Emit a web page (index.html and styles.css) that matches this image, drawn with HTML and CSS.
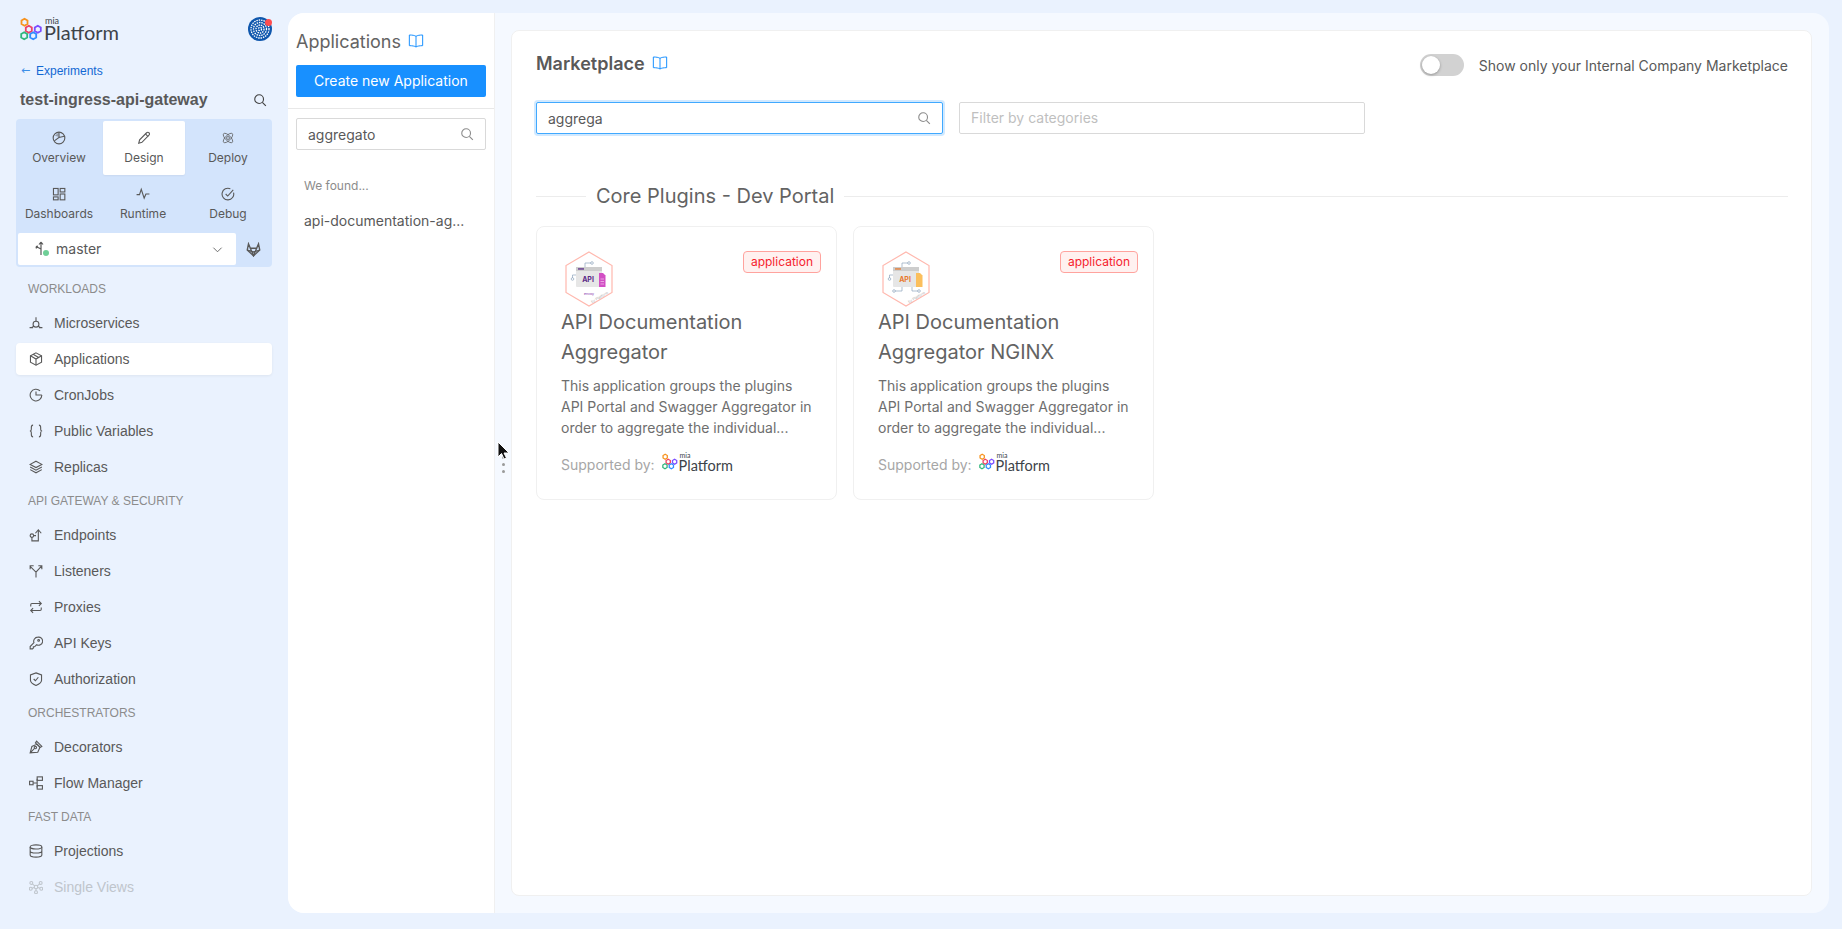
FILE: index.html
```html
<!DOCTYPE html>
<html lang="en">
<head>
    <meta charset="UTF-8">
    <meta name="viewport" content="width=device-width, initial-scale=1.0">
    <title>Applications - Mia Platform</title>
    <link rel="stylesheet" href="styles.css">
</head>
<body>
    <svg class="defs" width="0" height="0">
        <symbol id="i-search" viewBox="0 0 24 24"><circle cx="10.5" cy="10.5" r="7.5"/><path d="M16 16l6 6"/></symbol>
        <symbol id="i-book" viewBox="0 0 24 24"><path d="M12 5C10 3.5 6 3 2 3v16c4 0 8 .5 10 2 2-1.500 6-2 10-2V3c-4 0-8 .5-10 2zM12 5v16"/></symbol>
        <symbol id="i-logo" viewBox="0 0 24 22">
            <g fill="none" stroke-width="1.800">
                <path stroke="#f7931e" d="M4.500.8l3 1.800v3.400l-3 1.800-3-1.800V2.600z"/>
                <path stroke="#ee4266" d="M8.800 7.800l3 1.800V13l-3 1.800-3-1.800V9.600z"/>
                <path stroke="#7c4dff" d="M17.800 7.800l3 1.800V13l-3 1.800-3-1.800V9.600z"/>
                <path stroke="#2fb67c" d="M4.200 14.200l3 1.800v3.400l-3 1.800-3-1.800V16z"/>
                <path stroke="#2f8cff" d="M13.200 14.200l3 1.800v3.400l-3 1.800-3-1.800V16z"/>
            </g>
        </symbol>
        <symbol id="i-overview" viewBox="0 0 24 24"><circle cx="12" cy="12" r="10"/><path d="M12 2v9L4 17M12 11l9-2"/><path d="M5 8l6-5v7z" fill="currentColor" stroke="none" opacity=".5"/></symbol>
        <symbol id="i-design" viewBox="0 0 24 24"><path d="M3 21l1.500-6L16.500 3c1.300-1.300 3-1.300 4 0 1.200 1.200 1.200 2.800 0 4L8.500 19.500z"/><path d="M14.500 5l4.500 4.500"/></symbol>
        <symbol id="i-deploy" viewBox="0 0 24 24"><ellipse cx="12" cy="12" rx="10.500" ry="4.500" transform="rotate(-45 12 12)" stroke-width="1.300"/><ellipse cx="12" cy="12" rx="10.500" ry="4.500" transform="rotate(45 12 12)" stroke-width="1.300"/><circle cx="12" cy="12" r="2.500" stroke-width="1.300"/></symbol>
        <symbol id="i-dashboards" viewBox="0 0 24 24"><rect x="2.500" y="2.500" width="8" height="11"/><rect x="14" y="2.500" width="8" height="6"/><rect x="2.500" y="17" width="8" height="5"/><rect x="14" y="12" width="8" height="10"/></symbol>
        <symbol id="i-runtime" viewBox="0 0 24 24"><path d="M1 13h5l3-9 5 15 3-7h6"/></symbol>
        <symbol id="i-debug" viewBox="0 0 24 24"><path d="M21.500 9.500A10 10 0 1 1 16 3"/><path d="M8 12l3.500 3.500L21 5"/></symbol>
        <symbol id="i-chevron" viewBox="0 0 24 24"><path d="M3 8l9 9 9-9"/></symbol>
        <symbol id="i-gitlab" viewBox="0 0 24 24"><path d="M12 22L2 13 4 3l3 7h10l3-7 2 10z"/><path d="M2 13l10 3 10-3M7 10l5 12 5-12"/></symbol>
        <symbol id="i-microservices" viewBox="0 0 24 24"><circle cx="12" cy="14" r="5"/><path d="M12 2v7M1 20h6M17 20h6M4 20l5-3M20 20l-5-3"/></symbol>
        <symbol id="i-box" viewBox="0 0 24 24"><path d="M12 1.500l9.500 5v11L12 22.500l-9.500-5v-11z"/><path d="M2.500 6.500L12 12l9.500-5.500M12 12v10.500M7 4l9.500 5.500"/></symbol>
        <symbol id="i-clock" viewBox="0 0 24 24"><path d="M22 12a10 10 0 1 1-3-7"/><path d="M12 6v6h10"/></symbol>
        <symbol id="i-braces" viewBox="0 0 24 24"><path d="M7 2c-3 0-3 2-3 4v3c0 2-1 3-2.500 3C3 12 4 13 4 15v3c0 2 0 4 3 4M17 2c3 0 3 2 3 4v3c0 2 1 3 2.500 3-1.500 0-2.500 1-2.500 3v3c0 2 0 4-3 4"/></symbol>
        <symbol id="i-layers" viewBox="0 0 24 24"><path d="M12 2l10 5.500-10 5.500L2 7.500zM2 12l10 5.500L22 12M2 16.500L12 22l10-5.500"/></symbol>
        <symbol id="i-endpoints" viewBox="0 0 24 24"><circle cx="5" cy="13" r="3"/><path d="M5 16v6h11V4M11 9l5-6 5 6M8 13h4"/></symbol>
        <symbol id="i-listeners" viewBox="0 0 24 24"><path d="M2 4l10 10v9M12 14l9-10M2 9V3h6M16 3h6v6"/></symbol>
        <symbol id="i-proxies" viewBox="0 0 24 24"><path d="M3 11V8c0-1.500 1-2 2-2h16M17 2l4 4-4 4M21 13v3c0 1.500-1 2-2 2H3M7 22l-4-4 4-4"/></symbol>
        <symbol id="i-key" viewBox="0 0 24 24"><path d="M15 2a7 7 0 0 0-6.500 9.500L2 18v4h4l1.500-1.500v-2h2L13 15a7 7 0 1 0 2-13z"/><circle cx="16.500" cy="7.500" r="1.500"/></symbol>
        <symbol id="i-shield" viewBox="0 0 24 24"><path d="M12 1.500L21.500 5v9c0 4-5 7-9.500 9-4.500-2-9.500-5-9.500-9V5z"/><path d="M8 12l3 3 5-6"/></symbol>
        <symbol id="i-pen" viewBox="0 0 24 24"><path d="M2 22l3-11 9-4 5 5-4 9zM13 2l9 9-3 2-8-8zM2 22l7.500-7.500"/><circle cx="11" cy="13" r="2"/></symbol>
        <symbol id="i-flow" viewBox="0 0 24 24"><rect x="1" y="9" width="6" height="6"/><rect x="14" y="1.500" width="9" height="6"/><rect x="14" y="16.500" width="9" height="6"/><path d="M7 12h7M14 12V4.500M14 12v7.500"/></symbol>
        <symbol id="i-database" viewBox="0 0 24 24"><ellipse cx="12" cy="5" rx="10" ry="3.500"/><path d="M2 5v14c0 2 4.500 3.500 10 3.500s10-1.500 10-3.500V5M2 12c0 2 4.500 3.500 10 3.500S22 14 22 12"/></symbol>
        <symbol id="i-views" viewBox="0 0 24 24"><circle cx="12" cy="12" r="3"/><circle cx="4" cy="5" r="2.500"/><circle cx="20" cy="5" r="2.500"/><circle cx="3" cy="15" r="2.500"/><circle cx="21" cy="15" r="2.500"/><circle cx="12" cy="21" r="2.500"/><path d="M6 7l4 3M18 7l-4 3M5 14l4-1M19 14l-4-1M12 15v4"/></symbol>
    </svg>

    <!-- Left navigation -->
    <aside class="sidebar">
        <div class="brand-row">
            <div class="mia-logo">
                <svg class="mia-logo-mark"><use href="#i-logo"/></svg>
                <div class="mia-logo-text"><small>mia</small><span>Platform</span></div>
            </div>
            <div class="avatar">
                <svg viewBox="0 0 24 24" width="24" height="24">
                    <circle cx="12" cy="12" r="12" fill="#0f57ad"/>
                    <g fill="none" stroke="#fff" stroke-width="1.300" stroke-dasharray="1.500 .9">
                        <circle cx="12" cy="12" r="9"/>
                        <circle cx="12" cy="12" r="6.500"/>
                        <circle cx="12" cy="12" r="4"/>
                        <circle cx="12" cy="12" r="1.600"/>
                    </g>
                </svg>
                <span class="avatar-dot"></span>
            </div>
        </div>

        <a class="back-link" href="#"><span class="back-arrow">←</span>Experiments</a>

        <div class="project-row">
            <span class="project-name">test-ingress-api-gateway</span>
            <svg class="icon icon-search-dark"><use href="#i-search"/></svg>
        </div>

        <div class="section-nav">
            <div class="tabs">
                <a class="tab" href="#"><svg class="icon"><use href="#i-overview"/></svg>Overview</a>
                <a class="tab active" href="#"><svg class="icon"><use href="#i-design"/></svg>Design</a>
                <a class="tab" href="#"><svg class="icon"><use href="#i-deploy"/></svg>Deploy</a>
                <a class="tab" href="#"><svg class="icon"><use href="#i-dashboards"/></svg>Dashboards</a>
                <a class="tab" href="#"><svg class="icon"><use href="#i-runtime"/></svg>Runtime</a>
                <a class="tab" href="#"><svg class="icon"><use href="#i-debug"/></svg>Debug</a>
            </div>
            <div class="branch-row">
                <div class="branch-select">
                    <svg class="branch-icon" viewBox="0 0 18 18" width="18" height="18">
                        <path d="M8 2v13M8 2L6 4.500M8 2l2 2.500M8 9L3 6.500M3 6.500l2-.5M3 6.500l.5 2" fill="none" stroke="#595959" stroke-width="1.200"/>
                        <circle cx="13" cy="13" r="3" fill="#6fcf97"/>
                    </svg>
                    <span class="branch-name">master</span>
                    <svg class="icon icon-chevron"><use href="#i-chevron"/></svg>
                </div>
                <svg class="icon icon-gitlab"><use href="#i-gitlab"/></svg>
            </div>
        </div>

        <nav class="menu">
            <div class="menu-label">WORKLOADS</div>
            <a class="menu-item" href="#"><svg class="icon"><use href="#i-microservices"/></svg>Microservices</a>
            <a class="menu-item active" href="#"><svg class="icon"><use href="#i-box"/></svg>Applications</a>
            <a class="menu-item" href="#"><svg class="icon"><use href="#i-clock"/></svg>CronJobs</a>
            <a class="menu-item" href="#"><svg class="icon"><use href="#i-braces"/></svg>Public Variables</a>
            <a class="menu-item" href="#"><svg class="icon"><use href="#i-layers"/></svg>Replicas</a>

            <div class="menu-label">API GATEWAY &amp; SECURITY</div>
            <a class="menu-item" href="#"><svg class="icon"><use href="#i-endpoints"/></svg>Endpoints</a>
            <a class="menu-item" href="#"><svg class="icon"><use href="#i-listeners"/></svg>Listeners</a>
            <a class="menu-item" href="#"><svg class="icon"><use href="#i-proxies"/></svg>Proxies</a>
            <a class="menu-item" href="#"><svg class="icon"><use href="#i-key"/></svg>API Keys</a>
            <a class="menu-item" href="#"><svg class="icon"><use href="#i-shield"/></svg>Authorization</a>

            <div class="menu-label">ORCHESTRATORS</div>
            <a class="menu-item" href="#"><svg class="icon"><use href="#i-pen"/></svg>Decorators</a>
            <a class="menu-item" href="#"><svg class="icon"><use href="#i-flow"/></svg>Flow Manager</a>

            <div class="menu-label">FAST DATA</div>
            <a class="menu-item" href="#"><svg class="icon"><use href="#i-database"/></svg>Projections</a>
            <a class="menu-item disabled" href="#"><svg class="icon"><use href="#i-views"/></svg>Single Views</a>
        </nav>
    </aside>

    <div class="panel">
        <!-- Applications list -->
        <section class="apps-column">
            <div class="apps-head">
                <div class="apps-title">Applications <svg class="icon icon-book"><use href="#i-book"/></svg></div>
                <button class="create-btn">Create new Application</button>
            </div>
            <div class="apps-body">
                <div class="search-box">
                    <input type="text" value="aggregato">
                    <svg class="icon icon-search"><use href="#i-search"/></svg>
                </div>
                <div class="found-label">We found...</div>
                <div class="found-item">api-documentation-ag...</div>
            </div>
        </section>

        <!-- Marketplace -->
        <main class="content">
            <div class="market-card">
                <div class="market-head">
                    <div class="market-title">Marketplace <svg class="icon icon-book"><use href="#i-book"/></svg></div>
                    <div class="internal-toggle">
                        <span class="switch"><span class="switch-knob"></span></span>
                        Show only your Internal Company Marketplace
                    </div>
                </div>

                <div class="filters">
                    <div class="search-box focused">
                        <input type="text" value="aggrega">
                        <svg class="icon icon-search"><use href="#i-search"/></svg>
                    </div>
                    <div class="search-box filter-box">
                        <input type="text" placeholder="Filter by categories">
                    </div>
                </div>

                <div class="group-title"><span>Core Plugins - Dev Portal</span></div>

                <div class="plugin-grid">
                    <article class="plugin-card">
                        <span class="plugin-badge">application</span>
                        <svg class="plugin-image" viewBox="0 0 48 56" width="48" height="56">
                            <path d="M24 1l23 13.500v27L24 55 1 41.500v-27z" fill="#fff" stroke="#ffb8ae" stroke-width="1.200"/>
                            <g fill="none" stroke="#8da4bb" stroke-width=".7">
                                <path d="M20 16v-4h6"/><circle cx="27" cy="12" r="1.300"/>
                                <path d="M11 24H7.500v3"/><circle cx="7.500" cy="28" r="1.300"/>
                            </g>
                            <rect x="11" y="16" width="26" height="20" rx="1" fill="#e6e6e6"/>
                            <rect x="11" y="16" width="26" height="4" fill="#cdcdcd"/>
                            <rect x="13" y="17.300" width="6" height="1.300" fill="#5b2a86"/>
                            <text class="plugin-image-api" x="23" y="31" fill="#5b2a86">API</text>
                            <path d="M34 22h4l2.500 2.500V36H34z" fill="#d24fc4"/>
                            <path d="M35.500 28h3.500M35.500 30.500h3.500M35.500 33h3.500" stroke="#f4c9ef" stroke-width=".7"/>
                            <text class="plugin-image-small" x="19" y="44" fill="#7b2fa8">envoy</text>
                            <text class="plugin-image-small" x="27" y="52" fill="#a6a6a6" transform="rotate(-30 27 52)">by Platform</text>
                        </svg>
                        <h3 class="plugin-name">API Documentation Aggregator</h3>
                        <p class="plugin-desc">This application groups the plugins API Portal and Swagger Aggregator in order to aggregate the individual...</p>
                        <div class="plugin-support">
                            Supported by:
                            <div class="mia-logo small">
                                <svg class="mia-logo-mark"><use href="#i-logo"/></svg>
                                <div class="mia-logo-text"><small>mia</small><span>Platform</span></div>
                            </div>
                        </div>
                    </article>

                    <article class="plugin-card">
                        <span class="plugin-badge">application</span>
                        <svg class="plugin-image" viewBox="0 0 48 56" width="48" height="56">
                            <path d="M24 1l23 13.500v27L24 55 1 41.500v-27z" fill="#fff" stroke="#ffb8ae" stroke-width="1.200"/>
                            <g fill="none" stroke="#8da4bb" stroke-width=".7">
                                <path d="M20 16v-4h6"/><circle cx="27" cy="12" r="1.300"/>
                                <path d="M11 24H7.500v3"/><circle cx="7.500" cy="28" r="1.300"/>
                                <path d="M20 36v4h-7"/><circle cx="12" cy="40" r="1.300"/>
                                <path d="M30 36v4h6"/><circle cx="37" cy="40" r="1.300"/>
                            </g>
                            <rect x="11" y="16" width="26" height="20" rx="1" fill="#e6e6e6"/>
                            <rect x="11" y="16" width="26" height="4" fill="#cdcdcd"/>
                            <rect x="13" y="17.300" width="6" height="1.300" fill="#e8792e"/>
                            <text class="plugin-image-api" x="23" y="31" fill="#e8792e">API</text>
                            <path d="M34 22h4l2.500 2.500V36H34z" fill="#fbbf5d"/>
                            <text class="plugin-image-small" x="27" y="52" fill="#a6a6a6" transform="rotate(-30 27 52)">by Platform</text>
                        </svg>
                        <h3 class="plugin-name">API Documentation Aggregator NGINX</h3>
                        <p class="plugin-desc">This application groups the plugins API Portal and Swagger Aggregator in order to aggregate the individual...</p>
                        <div class="plugin-support">
                            Supported by:
                            <div class="mia-logo small">
                                <svg class="mia-logo-mark"><use href="#i-logo"/></svg>
                                <div class="mia-logo-text"><small>mia</small><span>Platform</span></div>
                            </div>
                        </div>
                    </article>
                </div>
            </div>
        </main>

        <!-- Column resize handle and mouse pointer -->
        <div class="resize-handle"><i></i><i></i><i></i></div>
        <svg class="mouse-cursor" viewBox="0 0 14 20" width="14" height="20">
            <path d="M1 1v15l3.500-3.500L7 18l2.500-1-2.500-5h5z" fill="#111" stroke="#fff" stroke-width="1"/>
        </svg>
    </div>
</body>
</html>
```

FILE: styles.css
```css
* {
    box-sizing: border-box;
}

html, body {
    height: 100%;
}

body {
    display: flex;
    margin: 0;
    overflow: hidden;
    background-color: #eaf2fe;
    color: #595959;
    font-family: Inter, "Liberation Sans", sans-serif;
    font-size: 14px;
}

a {
    color: inherit;
    text-decoration: none;
}

.defs {
    position: absolute;
}

.icon {
    display: block;
    flex: none;
    width: 14px;
    height: 14px;
    fill: none;
    stroke: currentColor;
    stroke-width: 1.900;
}

/* Sidebar */
.sidebar {
    flex: none;
    width: 288px;
    height: 100%;
    overflow: hidden;
    padding: 17px 16px 0;
}

.brand-row {
    display: flex;
    justify-content: space-between;
    height: 24px;
    padding-left: 4px;
}

.mia-logo {
    display: flex;
    height: 24px;
}

.mia-logo-mark {
    width: 24px;
    height: 24px;
}

.mia-logo-text {
    color: #3d4349;
    font-family: Lato, sans-serif;
    font-size: 20px;
}

.mia-logo-text small {
    display: block;
    height: 8px;
    padding-left: 1px;
    font-size: 9px;
    line-height: 8px;
}

.mia-logo-text span {
    display: block;
    height: 16px;
    line-height: 14px;
}

.mia-logo.small {
    height: 18px;
    margin: -4px 0 0 7px;
}

.mia-logo.small .mia-logo-mark {
    width: 17px;
    height: 17px;
}

.mia-logo.small .mia-logo-text {
    font-size: 14.500px;
}

.mia-logo.small .mia-logo-text small {
    height: 6px;
    font-size: 7px;
    line-height: 4px;
}

.mia-logo.small .mia-logo-text span {
    height: 12px;
    line-height: 13px;
}

.avatar {
    position: relative;
    width: 24px;
    height: 24px;
}

.avatar-dot {
    position: absolute;
    top: 2px;
    right: 0;
    width: 7px;
    height: 7px;
    border-radius: 50%;
    background-color: #ff4d4f;
}

.back-link {
    display: flex;
    height: 16px;
    margin: 22px 0 0 4px;
    color: #1268d3;
    font-family: "Liberation Sans", sans-serif;
    font-size: 12px;
    line-height: 16px;
}

.back-arrow {
    width: 16px;
    padding-left: 1px;
    color: #3d8fe8;
    font-family: "DejaVu Sans", sans-serif;
    font-size: 11px;
}

.project-row {
    display: flex;
    align-items: center;
    justify-content: space-between;
    height: 24px;
    margin-top: 9px;
    padding: 0 5px 0 4px;
}

.project-name {
    color: #595959;
    font-family: "Liberation Sans", sans-serif;
    font-size: 16px;
    font-weight: 700;
}

.icon-search-dark {
    color: #404040;
}

.section-nav {
    height: 148px;
    margin-top: 7px;
    padding: 2px;
    border-radius: 4px;
    background-color: #d3e4fc;
}

.tabs {
    display: grid;
    grid-template-columns: 82px 86px 84px;
    grid-auto-rows: 54px;
    row-gap: 2px;
}

.tab {
    display: flex;
    flex-direction: column;
    align-items: center;
    padding-top: 10px;
    font-size: 12px;
    line-height: 16px;
    white-space: nowrap;
}

.tab .icon {
    margin-bottom: 5px;
}

.tab.active {
    margin: 0 1px 0 3px;
    border-radius: 2px;
    background-color: #fff;
    box-shadow: 0 1px 2px rgba(0, 0, 0, 0.05);
}

.branch-row {
    display: flex;
    align-items: center;
    margin-top: 2px;
}

.branch-select {
    display: flex;
    align-items: center;
    width: 218px;
    height: 32px;
    padding: 0 13px 0 15px;
    border-radius: 2px;
    background-color: #fff;
}

.branch-icon {
    margin-right: 5px;
}

.branch-name {
    flex: 1;
    margin-top: -2px;
}

.icon-chevron {
    width: 11px;
    height: 11px;
}

.icon-gitlab {
    width: 15px;
    height: 15px;
    margin-left: 10px;
    stroke-width: 2.200;
}

/* Sidebar menu */
.menu {
    margin-top: 8px;
}

.menu-label {
    height: 28px;
    margin-bottom: 4px;
    padding-left: 12px;
    color: #8c8c8c;
    font-family: "Liberation Sans", sans-serif;
    font-size: 12px;
    line-height: 28px;
}

.menu-item {
    display: flex;
    align-items: center;
    height: 32px;
    margin-bottom: 4px;
    padding-left: 13px;
    border-radius: 4px;
    font-family: "Liberation Sans", sans-serif;
}

.menu-item .icon {
    margin-right: 11px;
}

.menu-item.active {
    background-color: #fff;
    box-shadow: 0 1px 3px rgba(0, 0, 0, 0.06);
}

.menu-item.disabled {
    color: #bfc5cc;
}

/* Main panel */
.panel {
    position: relative;
    display: flex;
    flex: 1;
    height: 900px;
    margin: 13px 13px 0 0;
    overflow: hidden;
    border-radius: 16px;
    background-color: #f5f9ff;
}

.apps-column {
    flex: none;
    width: 207px;
    border-right: 1px solid #f0f0f0;
    background-color: #fff;
}

.apps-head {
    height: 96px;
    padding: 15px 8px 0;
    border-bottom: 1px solid #e8e8e8;
}

.apps-title {
    display: flex;
    align-items: center;
    height: 26px;
    color: #636363;
    font-size: 18px;
}

.icon-book {
    width: 16px;
    height: 16px;
    margin-left: 7px;
    color: #1890ff;
    stroke-width: 1.500;
}

.create-btn {
    display: block;
    width: 190px;
    height: 32px;
    margin-top: 11px;
    padding: 0 0 2px;
    border: none;
    border-radius: 2px;
    background-color: #1890ff;
    color: #fff;
    font-family: inherit;
    font-size: 14px;
}

.apps-body {
    padding: 9px 8px 0;
}

.search-box {
    position: relative;
    display: flex;
    align-items: center;
    height: 32px;
    border: 1px solid #d9d9d9;
    border-radius: 2px;
    background-color: #fff;
}

.search-box input {
    flex: 1;
    width: 100%;
    height: 100%;
    padding: 0 11px;
    border: none;
    outline: none;
    background: transparent;
    color: #595959;
    font-family: inherit;
    font-size: 14px;
}

.search-box input::placeholder {
    color: #bfbfbf;
}

.search-box.focused {
    border-color: #40a9ff;
    box-shadow: 0 0 0 2px rgba(24, 144, 255, 0.2);
}

.filter-box {
    padding-bottom: 2px;
}

.icon-search {
    margin-right: 11px;
    color: #8c8c8c;
}

.found-label {
    margin-top: 28px;
    padding-left: 8px;
    color: #8c8c8c;
    font-size: 12px;
    line-height: 16px;
}

.found-item {
    margin-top: 17px;
    padding-left: 8px;
    line-height: 20px;
}

.content {
    flex: 1;
    min-width: 0;
    padding: 17px 17px 17px 16px;
}

.market-card {
    height: 100%;
    padding: 0 23px 0 24px;
    border: 1px solid #f0f0f0;
    border-radius: 8px;
    background-color: #fff;
}

.market-head {
    display: flex;
    justify-content: space-between;
    height: 26px;
    margin-top: 21px;
}

.market-title {
    display: flex;
    align-items: center;
    height: 24px;
    margin-top: -1px;
    color: #595959;
    font-size: 18px;
    font-weight: 600;
}

.internal-toggle {
    display: flex;
    align-items: center;
    gap: 15px;
    color: #595959;
}

.switch {
    position: relative;
    width: 44px;
    height: 22px;
    border-radius: 11px;
    background-color: #d2d2d2;
}

.switch-knob {
    position: absolute;
    top: 2px;
    left: 2px;
    width: 18px;
    height: 18px;
    border-radius: 50%;
    background-color: #fff;
    box-shadow: 0 1px 3px rgba(0, 0, 0, 0.3);
}

.filters {
    display: grid;
    grid-template-columns: 407px 406px;
    column-gap: 16px;
    margin-top: 24px;
}

.group-title {
    display: flex;
    align-items: center;
    gap: 10px;
    height: 28px;
    margin-top: 48px;
    color: #636363;
    font-size: 20px;
    line-height: 28px;
}

.group-title::before,
.group-title::after {
    content: "";
    height: 1px;
    background-color: #ececec;
}

.group-title::before {
    width: 50px;
}

.group-title::after {
    flex: 1;
}

.plugin-grid {
    display: grid;
    grid-template-columns: repeat(auto-fill, 301px);
    gap: 16px;
    margin-top: 16px;
}

.plugin-card {
    position: relative;
    height: 274px;
    padding: 24px 24px 0;
    border: 1px solid #f0f0f0;
    border-radius: 8px;
}

.plugin-badge {
    position: absolute;
    top: 24px;
    right: 15px;
    padding: 0 7px;
    border: 1px solid #ffa39e;
    border-radius: 4px;
    background-color: #fff1f0;
    color: #f5222d;
    font-size: 12px;
    line-height: 20px;
}

.plugin-image {
    display: block;
    margin-left: 4px;
}

.plugin-image-api {
    font-family: Inter, sans-serif;
    font-size: 7px;
    font-weight: 700;
    text-anchor: middle;
}

.plugin-image-small {
    font-family: Inter, sans-serif;
    font-size: 3.500px;
}

.plugin-name {
    margin: 0;
    color: #636363;
    font-size: 20px;
    font-weight: 400;
    line-height: 30px;
}

.plugin-desc {
    margin: 8px 0 0;
    color: #6e6e6e;
    line-height: 21px;
}

.plugin-support {
    display: flex;
    align-items: center;
    height: 22px;
    margin-top: 15px;
    color: #a6a6a6;
}

/* Overlays on the panel */
.resize-handle {
    position: absolute;
    top: 443px;
    left: 214px;
    display: flex;
    flex-direction: column;
    gap: 4px;
}

.resize-handle i {
    display: block;
    width: 3px;
    height: 3px;
    border-radius: 50%;
    background-color: #9a9a9a;
}

.mouse-cursor {
    position: absolute;
    top: 428px;
    left: 209px;
}
```
